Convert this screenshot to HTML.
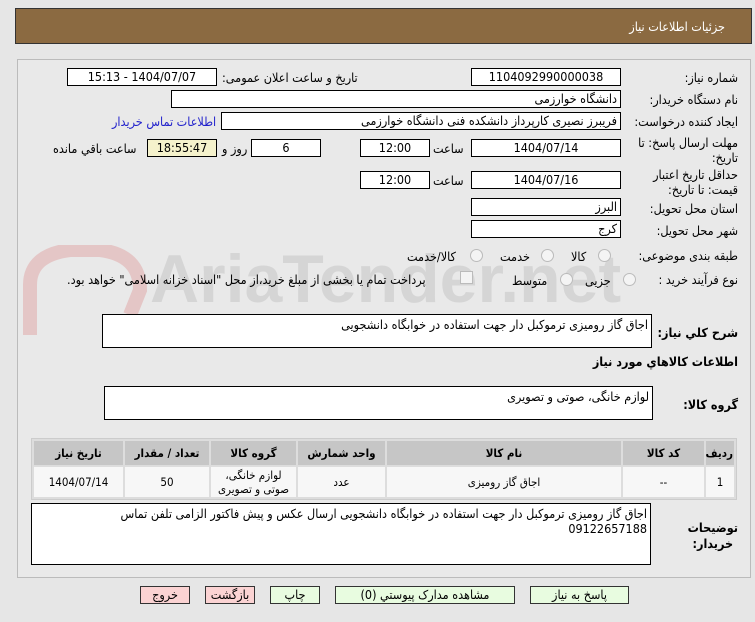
<!DOCTYPE html>
<html><head><meta charset="utf-8"><style>
body{margin:0;width:755px;height:622px;background:#e6e6e6;font-family:"DejaVu Sans Condensed","Liberation Sans",sans-serif;font-size:12.5px;color:#000;position:relative;overflow:hidden;direction:rtl}
.a{position:absolute}
.hdr{left:15px;top:8px;width:735px;height:34px;background:#8b6a41;border:1px solid #333}
.hdr span{position:absolute;right:26px;top:10px;color:#fff;font-size:12.5px}
.panel{left:17px;top:59px;width:732px;height:517px;border:1px solid #bbb;background:#e9e9e9}
.box{position:absolute;background:#fff;border:1px solid #000;box-sizing:border-box;height:18px;line-height:16px;padding:0 3px;white-space:nowrap;overflow:hidden}
.c{text-align:center}
.lbl{position:absolute;right:17px;white-space:nowrap}
.t{position:absolute;white-space:nowrap}
.rad{position:absolute;width:11px;height:11px;border:1px solid #bbb;border-radius:50%;background:#f4f4f4}
.ta{position:absolute;background:#fff;border:1px solid #000;box-sizing:border-box;padding:2px 3px}
table{position:absolute;left:31px;top:438px;width:706px;border-collapse:separate;border-spacing:2px;background:#ddd;border:1px solid #ccc;font-size:11.5px;table-layout:fixed}
th{background:#c6c6c6;height:22px;font-weight:bold}
td{background:#f7f7f7;height:28px;text-align:center;line-height:14px}
.btn{position:absolute;top:586px;height:18px;border:1px solid #333;box-sizing:border-box;text-align:center;line-height:16px}
.g{background:#e8fce0}.p{background:#fbd3d3}
</style></head><body>
<div class="a hdr"><span>جزئیات اطلاعات نیاز</span></div>
<div class="a panel"></div>
<svg class="a" style="left:20px;top:245px" width="130" height="90"><path d="M10 90 L10 40 Q10 10 50 5 L80 5 Q120 10 120 45 L110 70" fill="none" stroke="rgba(220,120,120,.3)" stroke-width="14"/></svg>
<div class="t" style="left:150px;top:240px;font-size:68px;font-weight:bold;color:rgba(170,170,170,.3);direction:ltr;font-family:'Liberation Sans',sans-serif">AriaTender.net</div>

<div class="lbl" style="top:70px">شماره نیاز:</div>
<div class="box c" style="left:471px;top:68px;width:150px">1104092990000038</div>
<div class="t" style="left:222px;top:70px">تاریخ و ساعت اعلان عمومی:</div>
<div class="box c" style="left:67px;top:68px;width:150px">1404/07/07 - 15:13</div>

<div class="lbl" style="top:92px">نام دستگاه خریدار:</div>
<div class="box" style="left:171px;top:90px;width:450px">دانشگاه خوارزمی</div>

<div class="lbl" style="top:114px">ایجاد کننده درخواست:</div>
<div class="box" style="left:221px;top:112px;width:400px">فریبرز نصیری کارپرداز دانشکده فنی دانشگاه خوارزمی</div>
<div class="t" style="left:112px;top:114px;color:#2222cc">اطلاعات تماس خریدار</div>

<div class="lbl" style="top:135px;line-height:15px">مهلت ارسال پاسخ: تا<br>تاریخ:</div>
<div class="box c" style="left:471px;top:139px;width:150px">1404/07/14</div>
<div class="t" style="left:433px;top:141px">ساعت</div>
<div class="box c" style="left:360px;top:139px;width:70px">12:00</div>
<div class="box c" style="left:251px;top:139px;width:70px">6</div>
<div class="t" style="left:222px;top:141px">روز و</div>
<div class="box c" style="left:147px;top:139px;width:70px;background:#f5f2cc">18:55:47</div>
<div class="t" style="left:53px;top:141px">ساعت باقي مانده</div>

<div class="lbl" style="top:167px;line-height:15px">حداقل تاریخ اعتبار<br>قیمت: تا تاریخ:</div>
<div class="box c" style="left:471px;top:171px;width:150px">1404/07/16</div>
<div class="t" style="left:433px;top:173px">ساعت</div>
<div class="box c" style="left:360px;top:171px;width:70px">12:00</div>

<div class="lbl" style="top:201px">استان محل تحویل:</div>
<div class="box" style="left:471px;top:198px;width:150px">البرز</div>
<div class="lbl" style="top:223px">شهر محل تحویل:</div>
<div class="box" style="left:471px;top:220px;width:150px">کرج</div>

<div class="lbl" style="top:248px">طبقه بندی موضوعی:</div>
<div class="rad" style="left:598px;top:249px"></div><div class="t" style="left:571px;top:249px">کالا</div>
<div class="rad" style="left:541px;top:249px"></div><div class="t" style="left:500px;top:249px">خدمت</div>
<div class="rad" style="left:470px;top:249px"></div><div class="t" style="left:407px;top:249px">کالا/خدمت</div>

<div class="lbl" style="top:272px">نوع فرآیند خرید :</div>
<div class="rad" style="left:623px;top:273px"></div><div class="t" style="left:585px;top:273px">جزیی</div>
<div class="rad" style="left:560px;top:273px"></div><div class="t" style="left:512px;top:273px">متوسط</div>
<div class="a" style="left:460px;top:271px;width:11px;height:11px;border:1px solid #bbb;background:#f4f4f4"></div>
<div class="t" style="left:67px;top:272px">پرداخت تمام یا بخشی از مبلغ خرید،از محل "اسناد خزانه اسلامی" خواهد بود.</div>

<div class="lbl" style="top:325px;font-weight:bold">شرح کلي نياز:</div>
<div class="ta" style="left:102px;top:314px;width:550px;height:34px">اجاق گاز رومیزی ترموکبل دار جهت استفاده در خوابگاه دانشجویی</div>
<div class="lbl" style="top:354px;font-weight:bold">اطلاعات کالاهاي مورد نياز</div>
<div class="lbl" style="top:397px;font-weight:bold">گروه کالا:</div>
<div class="ta" style="left:104px;top:386px;width:549px;height:34px">لوازم خانگی، صوتی و تصویری</div>

<table>
<colgroup><col style="width:28px"><col style="width:81px"><col style="width:234px"><col style="width:87px"><col style="width:85px"><col style="width:84px"><col></colgroup>
<tr><th>ردیف</th><th>کد کالا</th><th>نام کالا</th><th>واحد شمارش</th><th>گروه کالا</th><th>تعداد / مقدار</th><th>تاریخ نیاز</th></tr>
<tr><td>1</td><td>--</td><td>اجاق گاز رومیزی</td><td>عدد</td><td>لوازم خانگی،<br>صوتی و تصویری</td><td>50</td><td>1404/07/14</td></tr>
</table>

<div class="lbl" style="top:520px;font-weight:bold;line-height:16px;text-align:center">توضیحات<br>خریدار:</div>
<div class="ta" style="left:31px;top:503px;width:620px;height:62px;line-height:15px">اجاق گاز رومیزی ترموکبل دار جهت استفاده در خوابگاه دانشجویی ارسال عکس و پیش فاکتور الزامی تلفن تماس<br>09122657188</div>

<div class="btn g" style="left:530px;width:99px">پاسخ به نیاز</div>
<div class="btn g" style="left:335px;width:180px">مشاهده مدارک پیوستي (0)</div>
<div class="btn g" style="left:270px;width:50px">چاپ</div>
<div class="btn p" style="left:205px;width:50px">بازگشت</div>
<div class="btn p" style="left:140px;width:50px">خروج</div>
</body></html>
